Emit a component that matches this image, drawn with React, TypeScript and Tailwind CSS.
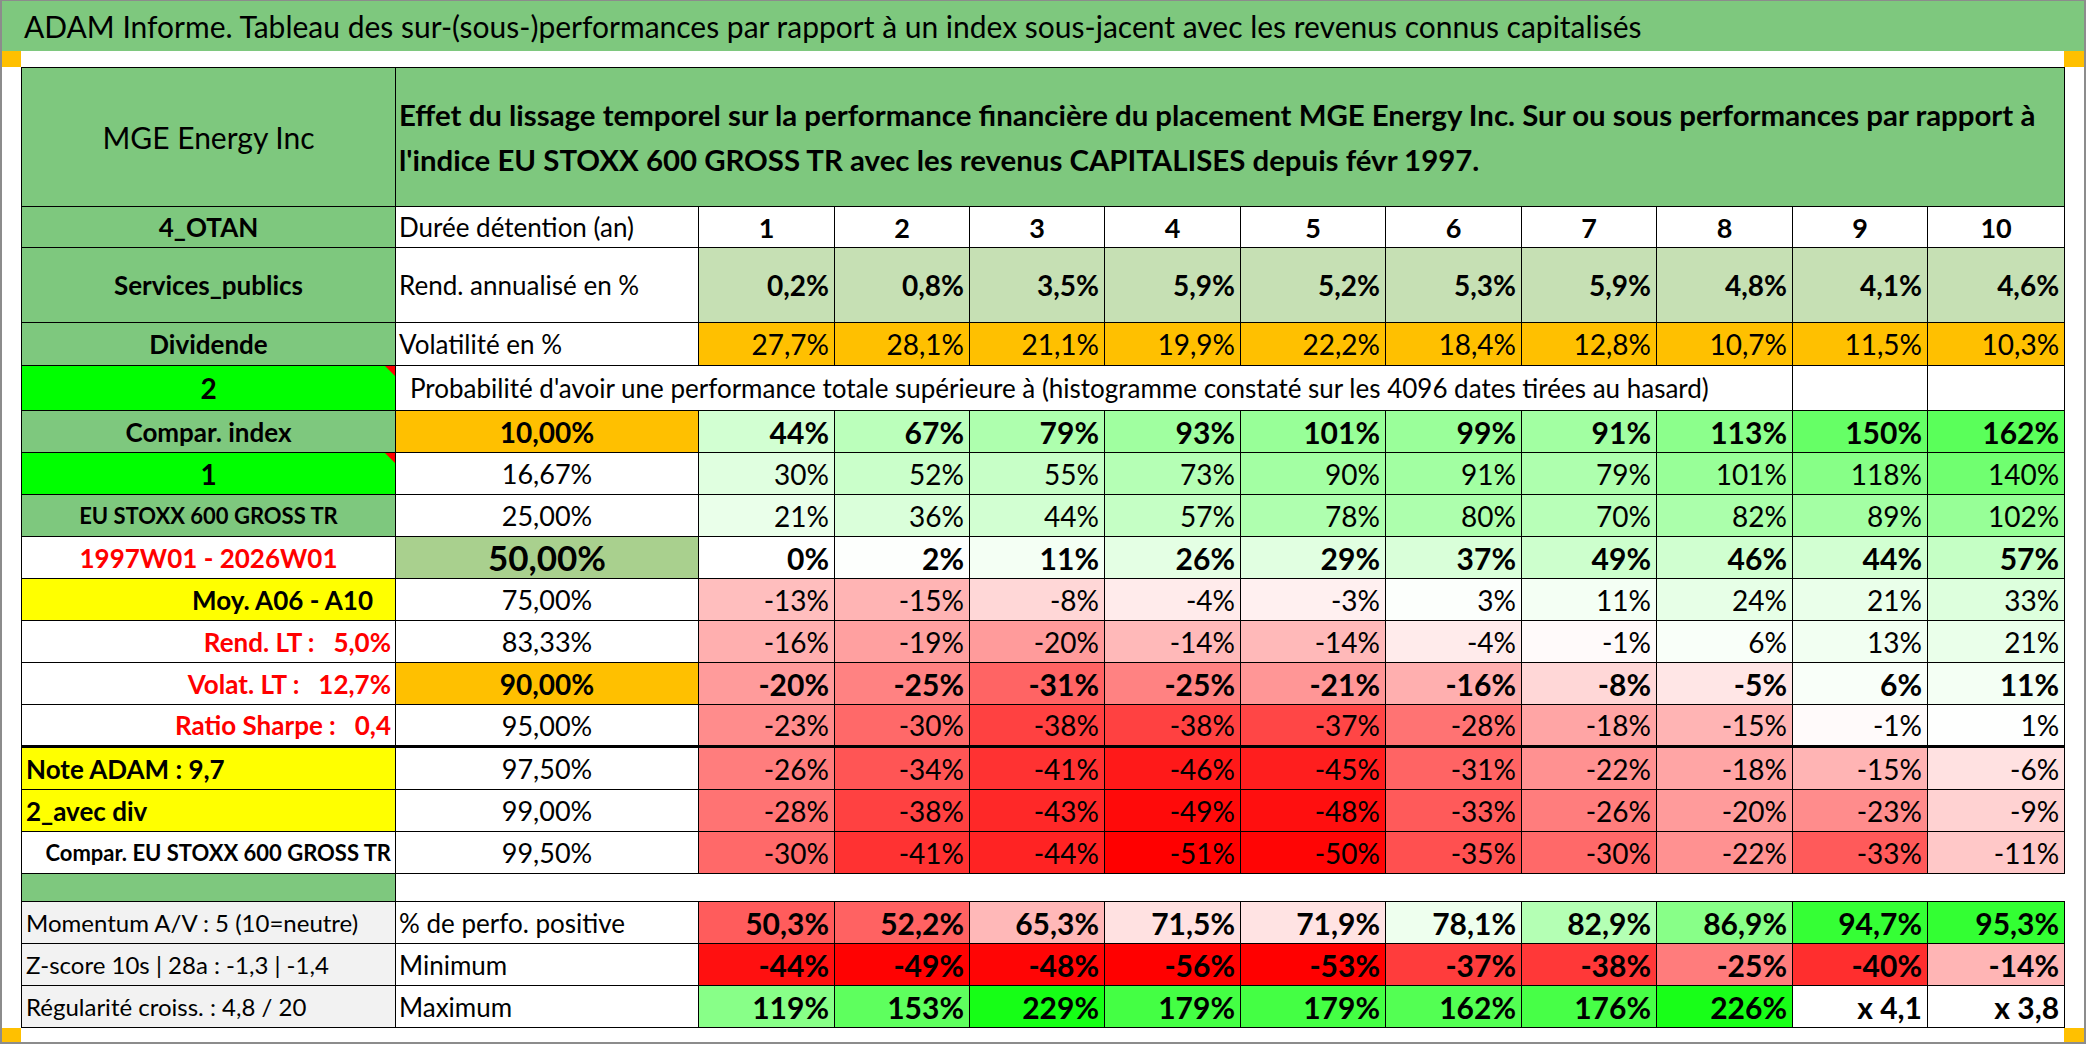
import React from 'react';

const cols = [
  'w-[374px]', 'w-[303px]', 'w-[136px]', 'w-[135px]', 'w-[135px]', 'w-[136px]',
  'w-[145px]', 'w-[136px]', 'w-[135px]', 'w-[136px]', 'w-[135px]', 'w-[137px]',
];

// colour scale of the probability block: red below 0, green above
const heat = (v: number) => {
  if (v >= 0) {
    const c = Math.round(255 * (1 - Math.min(v, 250) / 250));
    return `rgb(${c},255,${c})`;
  }
  const c = Math.round(255 * (1 - Math.min(-v, 51) / 51));
  return `rgb(255,${c},${c})`;
};

type ProbRow = {
  label: string;
  labelCls: string;
  pct: string;
  pctCls: string;
  bold?: boolean;
  marker?: boolean;
  thickTop?: boolean;
  vals: number[];
};

const probRows: ProbRow[] = [
  { label: 'Compar. index', labelCls: 'bg-[#7ec87e] text-center font-bold text-[26px]', pct: '10,00%', pctCls: 'bg-[#ffc000] font-bold text-[28px]', bold: true, vals: [44, 67, 79, 93, 101, 99, 91, 113, 150, 162] },
  { label: '1', labelCls: 'bg-[#00ff00] text-center font-bold text-[28px]', pct: '16,67%', pctCls: 'text-[27px]', marker: true, vals: [30, 52, 55, 73, 90, 91, 79, 101, 118, 140] },
  { label: 'EU STOXX 600 GROSS TR', labelCls: 'bg-[#7ec87e] text-center font-bold text-[22px]', pct: '25,00%', pctCls: 'text-[27px]', vals: [21, 36, 44, 57, 78, 80, 70, 82, 89, 102] },
  { label: '1997W01 - 2026W01', labelCls: 'text-center font-bold text-[26px] text-[#ff0000]', pct: '50,00%', pctCls: 'bg-[#a9d08e] font-bold text-[35px]', bold: true, vals: [0, 2, 11, 26, 29, 37, 49, 46, 44, 57] },
  { label: 'Moy. A06 - A10', labelCls: 'bg-[#ffff00] text-right pr-[22px] font-bold text-[26px]', pct: '75,00%', pctCls: 'text-[27px]', vals: [-13, -15, -8, -4, -3, 3, 11, 24, 21, 33] },
  { label: 'Rend. LT :\u00a0\u00a0\u00a05,0%', labelCls: 'text-right pr-[4px] font-bold text-[26px] text-[#ff0000]', pct: '83,33%', pctCls: 'text-[27px]', vals: [-16, -19, -20, -14, -14, -4, -1, 6, 13, 21] },
  { label: 'Volat. LT :\u00a0\u00a0\u00a012,7%', labelCls: 'text-right pr-[4px] font-bold text-[26px] text-[#ff0000]', pct: '90,00%', pctCls: 'bg-[#ffc000] font-bold text-[28px]', bold: true, vals: [-20, -25, -31, -25, -21, -16, -8, -5, 6, 11] },
  { label: 'Ratio Sharpe :\u00a0\u00a0\u00a00,4', labelCls: 'text-right pr-[4px] font-bold text-[26px] text-[#ff0000]', pct: '95,00%', pctCls: 'text-[27px]', vals: [-23, -30, -38, -38, -37, -28, -18, -15, -1, 1] },
  { label: 'Note ADAM : 9,7', labelCls: 'bg-[#ffff00] text-left pl-[4px] font-bold text-[26px]', pct: '97,50%', pctCls: 'text-[27px]', thickTop: true, vals: [-26, -34, -41, -46, -45, -31, -22, -18, -15, -6] },
  { label: '2_avec div', labelCls: 'bg-[#ffff00] text-left pl-[4px] font-bold text-[26px]', pct: '99,00%', pctCls: 'text-[27px]', vals: [-28, -38, -43, -49, -48, -33, -26, -20, -23, -9] },
  { label: 'Compar. EU STOXX 600 GROSS TR', labelCls: 'text-right pr-[4px] font-bold text-[22px]', pct: '99,50%', pctCls: 'text-[27px]', vals: [-30, -41, -44, -51, -50, -35, -30, -22, -33, -11] },
];

type Stat = { label: string; name: string; cells: [string, string][] };

const stats: Stat[] = [
  {
    label: 'Momentum A/V : 5 (10=neutre)',
    name: '% de perfo. positive',
    cells: [['50,3%', '#ff5c5c'], ['52,2%', '#ff6262'], ['65,3%', '#ffb8b8'], ['71,5%', '#ffe1e1'], ['71,9%', '#ffe3e3'], ['78,1%', '#eeffee'], ['82,9%', '#b4ffb4'], ['86,9%', '#88ff88'], ['94,7%', '#35ff35'], ['95,3%', '#33ff33']],
  },
  {
    label: 'Z-score 10s | 28a : -1,3 | -1,4',
    name: 'Minimum',
    cells: [['-44%', '#ff1010'], ['-49%', '#ff0202'], ['-48%', '#ff0505'], ['-56%', '#ff0000'], ['-53%', '#ff0000'], ['-37%', '#ff3c3c'], ['-38%', '#ff3838'], ['-25%', '#ff7c7c'], ['-40%', '#ff2e2e'], ['-14%', '#ffb5b5']],
  },
  {
    label: 'Régularité croiss. : 4,8 / 20',
    name: 'Maximum',
    cells: [['119%', '#88ff88'], ['153%', '#5eff5e'], ['229%', '#16ff16'], ['179%', '#44ff44'], ['179%', '#44ff44'], ['162%', '#53ff53'], ['176%', '#47ff47'], ['226%', '#18ff18'], ['x 4,1', '#ffffff'], ['x 3,8', '#ffffff']],
  },
];

const rend = ['0,2%', '0,8%', '3,5%', '5,9%', '5,2%', '5,3%', '5,9%', '4,8%', '4,1%', '4,6%'];
const vola = ['27,7%', '28,1%', '21,1%', '19,9%', '22,2%', '18,4%', '12,8%', '10,7%', '11,5%', '10,3%'];

const td = 'border border-black p-0 align-middle whitespace-nowrap';
const num = 'text-right pr-[5px] leading-none';

function Marker() {
  return <span className="absolute right-0 top-0 border-l-[10px] border-t-[10px] border-l-transparent border-t-[#ff0000]" />;
}

export default function App() {
  return (
    <div className="w-[2086px] h-[1044px] bg-white border-l-2 border-r-2 border-b-2 border-t border-[#8c8c8c] flex flex-col overflow-hidden font-['Lato',sans-serif] text-black">
      <div className="h-[51px] bg-[#7ec87e] flex items-center pl-[22px] text-[30px] leading-none whitespace-nowrap">
        ADAM Informe. Tableau des sur-(sous-)performances par rapport à un index sous-jacent avec les revenus connus capitalisés
      </div>
      <div className="h-[16px] flex justify-between">
        <div className="w-[19px] bg-[#ffc000]" />
        <div className="w-[20px] bg-[#ffc000]" />
      </div>
      <table className="ml-[19px] table-fixed border-collapse w-[2043px] leading-none">
        <colgroup>
          {cols.map((c, i) => (
            <col key={i} className={c} />
          ))}
        </colgroup>
        <tbody>
          <tr className="h-[139px]">
            <td className={`${td} bg-[#7ec87e] text-center text-[30px]`}>MGE Energy Inc</td>
            <td colSpan={11} className={`${td} bg-[#7ec87e] pl-[3px] text-[29.4px] font-bold leading-[45px]`}>
              Effet du lissage temporel sur la performance financière du placement MGE Energy Inc. Sur ou sous performances par rapport à
              <br />
              l'indice EU STOXX 600 GROSS TR avec les revenus CAPITALISES depuis févr 1997.
            </td>
          </tr>
          <tr className="h-[41px]">
            <td className={`${td} bg-[#7ec87e] text-center font-bold text-[26px]`}>4_OTAN</td>
            <td className={`${td} pl-[3px] text-[26px]`}>Durée détention (an)</td>
            {Array.from({ length: 10 }, (_, i) => (
              <td key={i} className={`${td} text-center font-bold text-[27px]`}>{i + 1}</td>
            ))}
          </tr>
          <tr className="h-[75px]">
            <td className={`${td} bg-[#7ec87e] text-center font-bold text-[26px]`}>Services_publics</td>
            <td className={`${td} pl-[3px] text-[26px]`}>Rend. annualisé en %</td>
            {rend.map((v, i) => (
              <td key={i} className={`${td} ${num} bg-[#c6e0b4] font-bold text-[28px]`}>{v}</td>
            ))}
          </tr>
          <tr className="h-[43px]">
            <td className={`${td} bg-[#7ec87e] text-center font-bold text-[26px]`}>Dividende</td>
            <td className={`${td} pl-[3px] text-[26px]`}>Volatilité en %</td>
            {vola.map((v, i) => (
              <td key={i} className={`${td} ${num} bg-[#ffc000] text-[28px]`}>{v}</td>
            ))}
          </tr>
          <tr className="h-[45px]">
            <td className={`${td} relative bg-[#00ff00] text-center font-bold text-[28px]`}>
              2
              <Marker />
            </td>
            <td colSpan={9} className={`${td} pl-[14px] text-[26px]`}>
              Probabilité d'avoir une performance totale supérieure à (histogramme constaté sur les 4096 dates tirées au hasard)
            </td>
            <td className={td} />
            <td className={td} />
          </tr>
          {probRows.map((r) => (
            <tr key={r.pct} className={r.thickTop ? 'h-[43px] border-t-[3px] border-black' : 'h-[42px]'}>
              <td className={`${td} ${r.marker ? 'relative' : ''} ${r.labelCls}`}>
                {r.label}
                {r.marker && <Marker />}
              </td>
              <td className={`${td} text-center ${r.pctCls}`}>{r.pct}</td>
              {r.vals.map((v, i) => (
                <td
                  key={i}
                  className={`${td} ${num} ${r.bold ? 'font-bold text-[30px]' : 'text-[28px]'}`}
                  style={{ backgroundColor: heat(v) }}
                >
                  {v}%
                </td>
              ))}
            </tr>
          ))}
          <tr className="h-[28px]">
            <td className={`${td} bg-[#7ec87e]`} />
            <td colSpan={11} className="border-y border-black p-0" />
          </tr>
          {stats.map((s) => (
            <tr key={s.name} className="h-[42px]">
              <td className={`${td} bg-[#f2f2f2] pl-[4px] text-[24px]`}>{s.label}</td>
              <td className={`${td} pl-[3px] text-[26px]`}>{s.name}</td>
              {s.cells.map(([t, c], i) => (
                <td key={i} className={`${td} ${num} font-bold text-[30px]`} style={{ backgroundColor: c }}>
                  {t}
                </td>
              ))}
            </tr>
          ))}
        </tbody>
      </table>
      <div className="mt-auto h-[14px] flex justify-between">
        <div className="w-[19px] bg-[#ffc000]" />
        <div className="w-[20px] bg-[#ffc000]" />
      </div>
    </div>
  );
}
